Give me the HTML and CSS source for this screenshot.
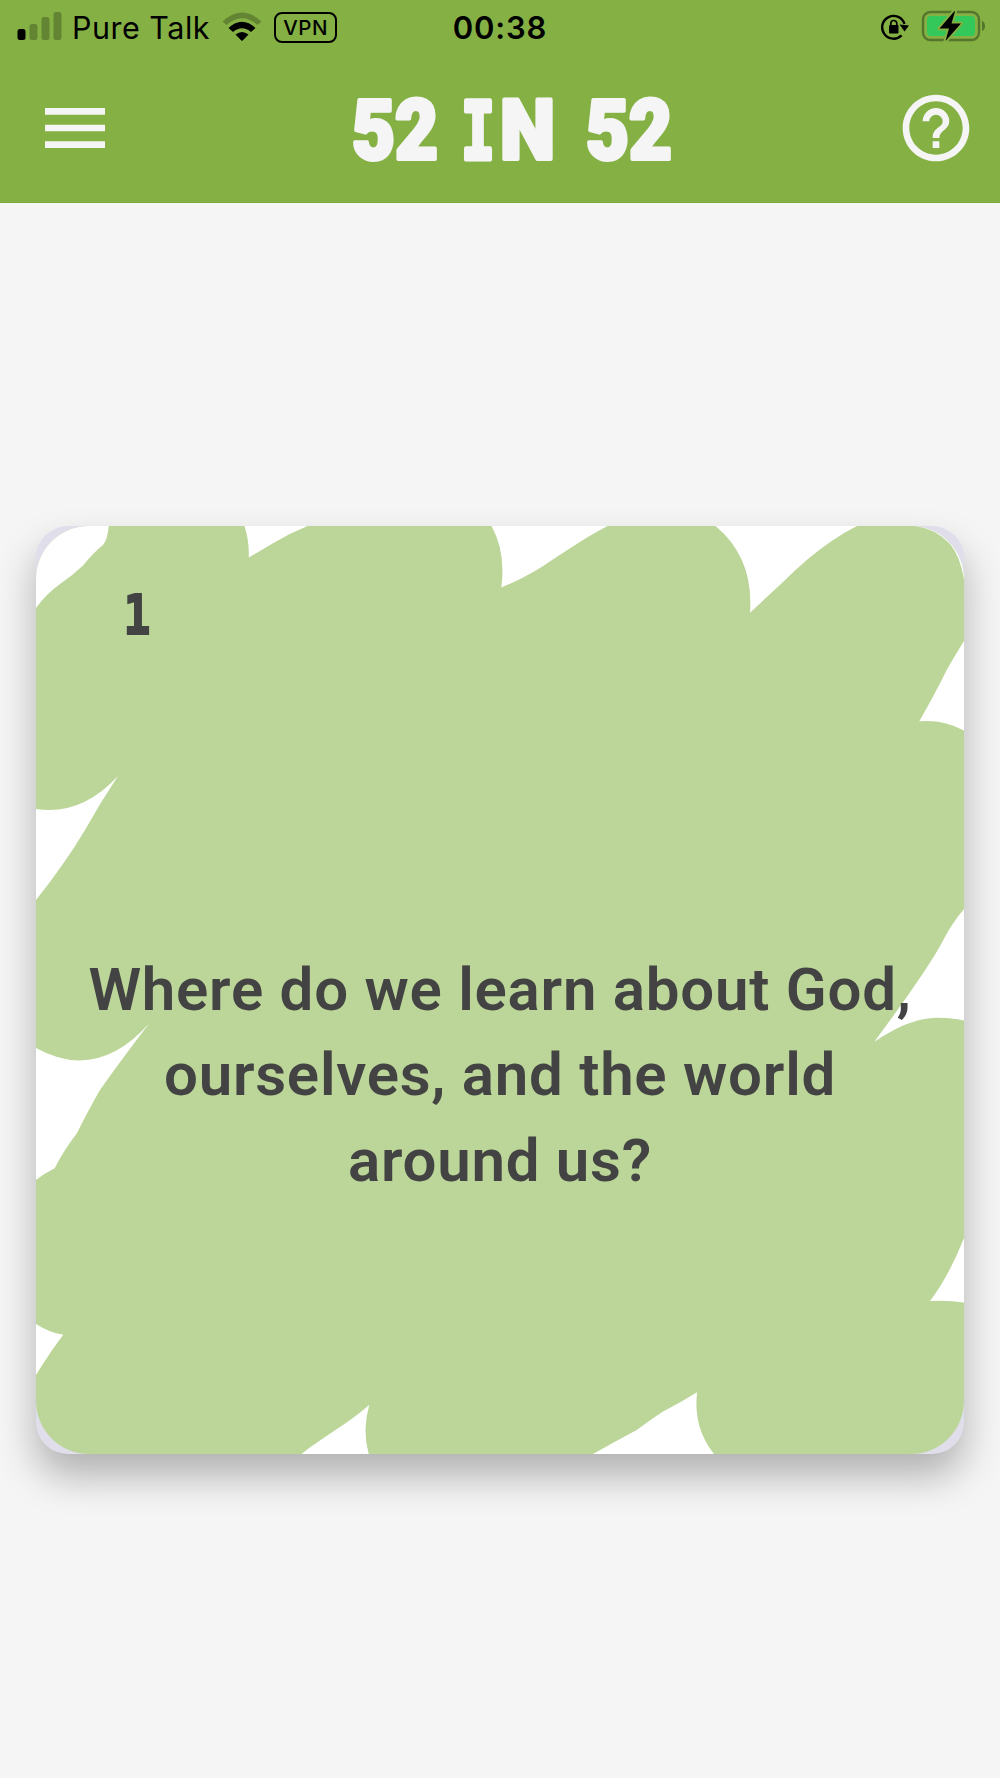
FILE: index.html
```html
<!DOCTYPE html>
<html lang="en">

<head>
    <meta charset="UTF-8">
    <meta name="viewport" content="width=device-width, initial-scale=1.0">
    <title>52 in 52</title>
    <link rel="stylesheet" href="styles.css">
</head>

<body>
    <div class="app">
        <header class="header">
            <div class="status">
                <div class="status-left">
                    <svg class="signal" viewBox="0 0 46 28">
                        <rect x="0.5" y="17" width="8" height="11" rx="2.5" />
                        <g class="dim">
                            <rect x="12.5" y="12" width="8" height="16" rx="2.5" />
                            <rect x="24.5" y="5" width="8" height="23" rx="2.5" />
                            <rect x="36.5" y="0" width="8" height="28" rx="2.5" />
                        </g>
                    </svg>
                    <span class="carrier">Pure Talk</span>
                    <svg class="wifi" viewBox="0 0 40 30">
                        <path class="dim" d="M0.5 9.5Q20 -8.500 39.500 9.500L35.500 13Q20 -0.500 4.500 13Z" />
                        <path d="M6.500 16Q20 3.500 33.500 16L29 20Q20 12.500 11 20Z" />
                        <path d="M13.500 22.500Q20 17.500 26.500 22.500L20.700 28.500Q20 29.200 19.300 28.500Z" />
                    </svg>
                    <span class="vpn">VPN</span>
                </div>
                <div class="clock">00:38</div>
                <div class="status-right">
                    <svg class="lock" viewBox="0 0 28 26">
                        <path class="ring" d="M20.600 21.400A11.400 11.400 0 1 1 23.500 10" />
                        <path d="M18.500 10.500L28 11.500L23.500 17.500Z" />
                        <rect x="8" y="11" width="9.500" height="8.500" rx="1.2" />
                        <path class="shackle" d="M9.800 12V9.500A3 3 0 0 1 15.800 9.500V12" />
                    </svg>
                    <svg class="battery" viewBox="0 0 66 32">
                        <rect class="shell" x="2" y="2" width="56" height="28" rx="7.500" />
                        <path class="shell-tip" d="M61 11Q64 12 64 16Q64 20 61 21Z" />
                        <rect class="level" x="6" y="6" width="48" height="20" rx="4" />
                        <path class="bolt" d="M33.500 1L18.500 18.500H28L24.500 31L40 13.500H30.500L34 1.500Z" />
                    </svg>
                </div>
            </div>
            <div class="bar">
                <svg class="icon-menu" viewBox="0 0 24 24">
                    <path d="M3 18h18v-2H3v2zm0-5h18v-2H3v2zm0-7v2h18V6H3z" />
                </svg>
                <svg class="title" viewBox="0 0 350 120">
                    <text x="21" y="91" textLength="86" lengthAdjust="spacingAndGlyphs">52</text>
                    <text class="slab" x="130" y="91" textLength="34" lengthAdjust="spacingAndGlyphs">I</text>
                    <text x="169" y="91" textLength="55" lengthAdjust="spacingAndGlyphs">N</text>
                    <text x="255" y="91" textLength="86" lengthAdjust="spacingAndGlyphs">52</text>
                </svg>
                <svg class="icon-help" viewBox="0 0 24 24">
                    <path d="M11 18h2v-2h-2v2zm1-16C6.480 2 2 6.480 2 12s4.480 10 10 10 10-4.480 10-10S17.520 2 12 2zm0 18c-4.410 0-8-3.590-8-8s3.590-8 8-8 8 3.590 8 8-3.590 8-8 8zm0-14c-2.210 0-4 1.790-4 4h2c0-1.100.9-2 2-2s2 .9 2 2c0 2-3 1.750-3 5h2c0-2.250 3-2.500 3-5 0-2.210-1.790-4-4-4z" />
                </svg>
            </div>
        </header>
        <main class="content">
            <div class="card">
                <div class="card-face">
                    <svg class="brush" viewBox="0 0 928 928">
                        <!-- top edge -->
                        <path d="M0 0H72.700Q71.500 14 67 19Q58 26 47 39.500Q37 49 24 58Q10 68 0 82Z" />
                        <path d="M208.500 0Q213.500 16 212.700 31.500L237 17.300Q254 7 271.500 0Z" />
                        <path d="M455.500 0Q470 26 465.300 61.500Q484 54 500.700 44C522 31 544 14 571.500 0Z" />
                        <path d="M679.500 0Q718 32 714 86.700L745.700 57.300Q758 45 770.700 34Q797 12 821 0Z" />
                        <path d="M880 0Q900 3 914 18Q924 30 928 53V0Z" />
                        <!-- right edge -->
                        <path d="M928 115Q918 131 910.700 144Q900 166 883.300 195.300Q907 193 928 204.500Z" />
                        <path d="M928 383Q916 397 907.300 414Q893 442 838.300 515.700C874 492 897 488 928 494.500Z" />
                        <path d="M928 712Q913 750 894 775Q912 774 928 776.500Z" />
                        <!-- left edge -->
                        <path d="M0 283Q45 290 82 250Q64 277 49 304Q28 339 0 374Z" />
                        <path d="M0 522Q61 556 113.300 497.300Q83 537 64 564Q54 581 41 607Q26 627 18.700 642.300Q9 647 0 654Z" />
                        <path d="M0 798Q14 807 27.300 808.700Q14 826 0 849Z" />
                        <!-- bottom edge -->
                        <path d="M265.500 928C285 912 313 897 333.300 878.700Q326 904 332.700 928Z" />
                        <path d="M557 928Q580 915 600.700 904Q614 894 627 885.500Q644 877 661 866.300Q657 902 678 928Z" />
                    </svg>
                    <div class="card-body">
                        <div class="number">1</div>
                        <p class="question">Where do we learn about God,<br>ourselves, and the world<br>around us?</p>
                    </div>
                </div>
            </div>
        </main>
    </div>
</body>

</html>
```

FILE: styles.css
```css
* {
    margin: 0;
    padding: 0;
    box-sizing: border-box;
}

body {
    background: #f5f5f5;
    font-family: Roboto, "Liberation Sans", sans-serif;
}

svg {
    display: block;
    flex-shrink: 0;
}

.app {
    width: 1000px;
    height: 1778px;
    display: flex;
    flex-direction: column;
    overflow: hidden;
}

.header {
    height: 203px;
    background: #85b144;
    border-bottom: 1px solid #7da83e;
    flex-shrink: 0;
}

/* status bar */
.status {
    height: 54px;
    display: grid;
    grid-template-columns: 1fr auto 1fr;
    align-items: center;
    padding: 0 14px 0 17px;
    font-family: Inter, "Liberation Sans", sans-serif;
    color: #000;
}

.status-left,
.status-right {
    display: flex;
    align-items: center;
}

.status-right {
    justify-content: flex-end;
    gap: 12px;
    margin-right: -1px;
}

.dim {
    opacity: .25;
}

.signal {
    width: 46px;
    height: 28px;
    margin-top: -2px;
}

.carrier {
    margin-left: 9px;
    font-size: 30.5px;
    letter-spacing: .5px;
    white-space: nowrap;
}

.wifi {
    width: 40px;
    height: 30px;
    margin-left: 12px;
}

.vpn {
    width: 63px;
    height: 31px;
    margin-left: 12px;
    border: 2px solid #000;
    border-radius: 8px;
    font-size: 20.5px;
    font-weight: 500;
    line-height: 27px;
    letter-spacing: .5px;
    text-align: center;
}

.clock {
    margin-left: -3px;
    font-size: 31px;
    font-weight: 600;
    letter-spacing: .8px;
}

.lock {
    width: 28px;
    height: 26px;
}

.ring,
.shackle {
    fill: none;
    stroke: #000;
    stroke-width: 2.4;
}

.shackle {
    stroke-width: 1.7;
}

.battery {
    width: 66px;
    height: 32px;
    margin-top: -2px;
}

.shell {
    fill: none;
    stroke: #56752c;
    stroke-width: 2.4;
}

.shell-tip {
    fill: #56752c;
}

.level {
    fill: #34c759;
}

.bolt {
    stroke: #85b144;
    stroke-width: 4;
    stroke-linejoin: round;
    paint-order: stroke;
}

/* title bar */
.bar {
    height: 148px;
    display: flex;
    align-items: center;
    justify-content: space-between;
    padding: 0 24px 0 35px;
    fill: #f5f5f5;
}

.icon-menu {
    width: 80px;
    height: 80px;
}

.icon-help {
    width: 80px;
    height: 80px;
}

.title {
    width: 350px;
    height: 120px;
    font: 900 83px Roboto, "Liberation Sans", sans-serif;
    stroke: #f5f5f5;
    stroke-width: 4;
    stroke-linejoin: round;
}

.slab {
    font: 700 80px "DejaVu Sans Mono", monospace;
    stroke-width: 5;
}

/* card */
.content {
    flex: 1;
    padding: 323px 36px 0;
}

.card {
    height: 928px;
    border-radius: 32px;
    background: #e1deeb;
    box-shadow: 0 22px 38px rgba(0, 0, 0, .28);
}

.card-face {
    height: 928px;
    display: grid;
    border-radius: 53px;
    background: #bcd699;
    overflow: hidden;
}

.brush,
.card-body {
    grid-area: 1 / 1;
}

.brush {
    width: 928px;
    height: 928px;
    fill: #fff;
}

.card-body {
    color: #434343;
    z-index: 1;
}

.number {
    width: 34px;
    margin: 56px 0 0 84px;
    font: 700 56px/66px "DejaVu Sans Mono", monospace;
    transform: scaleX(.8);
    -webkit-text-stroke: 2px #434343;
}

.question {
    margin-top: 299px;
    font-size: 60px;
    font-weight: 600;
    line-height: 85.3px;
    letter-spacing: .75px;
    text-align: center;
    white-space: nowrap;
}
```
